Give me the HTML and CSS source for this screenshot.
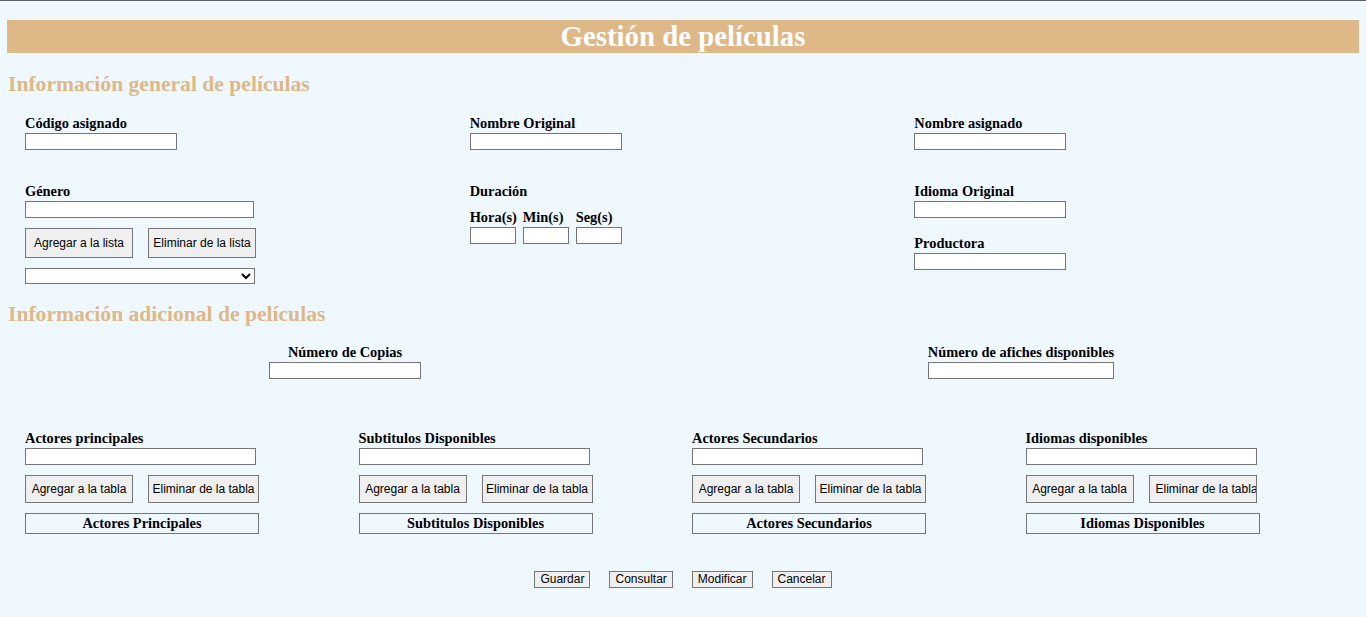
FILE: index.html
```html
<!DOCTYPE html>
<html lang="es">
<head>
<meta charset="utf-8">
<title>Gestión de películas</title>
<link rel="stylesheet" href="styles.css">
</head>
<body>
<div class="page">
  <h1 class="banner">Gestión de películas</h1>

  <h2 class="section">Información general de películas</h2>
  <div class="general">
    <div class="field">
      <label class="lbl">Código asignado</label>
      <input class="txt w152" type="text">
    </div>
    <div class="field">
      <label class="lbl">Nombre Original</label>
      <input class="txt w152" type="text">
    </div>
    <div class="field">
      <label class="lbl">Nombre asignado</label>
      <input class="txt w152" type="text">
    </div>

    <div class="field">
      <label class="lbl">Género</label>
      <input class="txt w229" type="text">
      <div class="btnrow">
        <button class="btn">Agregar a la lista</button>
        <button class="btn">Eliminar de la lista</button>
      </div>
      <select class="sel"><option></option></select>
    </div>
    <div class="field">
      <label class="lbl">Duración</label>
      <div class="duration">
        <div class="dur">
          <label class="lbl">Hora(s)</label>
          <input class="txt w46" type="text">
        </div>
        <div class="dur">
          <label class="lbl">Min(s)</label>
          <input class="txt w46" type="text">
        </div>
        <div class="dur">
          <label class="lbl">Seg(s)</label>
          <input class="txt w46" type="text">
        </div>
      </div>
    </div>
    <div class="field">
      <label class="lbl">Idioma Original</label>
      <input class="txt w152" type="text">
      <label class="lbl lbl-gap">Productora</label>
      <input class="txt w152" type="text">
    </div>
  </div>

  <h2 class="section section-2">Información adicional de películas</h2>
  <div class="extra">
    <div class="cell">
      <label class="lbl">Número de Copias</label>
      <input class="txt w152" type="text">
    </div>
    <div class="cell">
      <label class="lbl">Número de afiches disponibles</label>
      <input class="txt w186" type="text">
    </div>
  </div>

  <div class="lists">
    <div class="field">
      <label class="lbl">Actores principales</label>
      <input class="txt w231" type="text">
      <div class="btnrow">
        <button class="btn btn-t">Agregar a la tabla</button>
        <button class="btn btn-t btn-del">Eliminar de la tabla</button>
      </div>
      <div class="tbl">Actores Principales</div>
    </div>
    <div class="field">
      <label class="lbl">Subtitulos Disponibles</label>
      <input class="txt w231" type="text">
      <div class="btnrow">
        <button class="btn btn-t">Agregar a la tabla</button>
        <button class="btn btn-t btn-del">Eliminar de la tabla</button>
      </div>
      <div class="tbl">Subtitulos Disponibles</div>
    </div>
    <div class="field">
      <label class="lbl">Actores Secundarios</label>
      <input class="txt w231" type="text">
      <div class="btnrow">
        <button class="btn btn-t">Agregar a la tabla</button>
        <button class="btn btn-t btn-del">Eliminar de la tabla</button>
      </div>
      <div class="tbl">Actores Secundarios</div>
    </div>
    <div class="field">
      <label class="lbl">Idiomas disponibles</label>
      <input class="txt w231" type="text">
      <div class="btnrow">
        <button class="btn btn-t">Agregar a la tabla</button>
        <button class="btn btn-t btn-del btn-clip">Eliminar de la tabla</button>
      </div>
      <div class="tbl">Idiomas Disponibles</div>
    </div>
  </div>

  <div class="actions">
    <button class="act">Guardar</button>
    <button class="act">Consultar</button>
    <button class="act">Modificar</button>
    <button class="act">Cancelar</button>
  </div>
</div>
</body>
</html>
```

FILE: styles.css
```css
html {
  background: #f0f8ff;
}
body {
  margin: 0;
  border-top: 1px solid #5f5f5f;
  background: #f0f8ff;
  font-family: "Liberation Serif", "Times New Roman", serif;
  color: #000;
}
.page {
  padding: 19px 7px 0 7px;
}
.banner {
  margin: 0;
  height: 33px;
  line-height: 33px;
  background: #deb887;
  color: #fff;
  text-align: center;
  font-size: 28.8px;
  font-weight: bold;
}
.section {
  margin: 17px 0 0 1px;
  height: 28px;
  line-height: 28px;
  font-size: 21.6px;
  font-weight: bold;
  color: #deb887;
}
.section-2 {
  margin-top: 16px;
}
.general {
  margin-top: 17px;
  padding-left: 18px;
  display: grid;
  grid-template-columns: repeat(3, 1fr);
  row-gap: 33px;
  align-items: start;
}
.field {
  display: flex;
  flex-direction: column;
  align-items: flex-start;
}
.lbl {
  display: block;
  font-size: 14.4px;
  line-height: 16px;
  padding-bottom: 2px;
  font-weight: bold;
  white-space: nowrap;
}
.lbl-gap {
  margin-top: 17px;
}
.txt {
  box-sizing: border-box;
  height: 17px;
  border: 1px solid #767676;
  background: #fff;
  padding: 0 2px;
  margin: 0;
  display: block;
}
.w46 { width: 46px; }
.w152 { width: 152px; }
.w186 { width: 186px; }
.w229 { width: 229px; }
.w231 { width: 231px; }
.btnrow {
  display: flex;
  gap: 15px;
  margin-top: 10px;
}
.btn {
  box-sizing: border-box;
  width: 108px;
  height: 30px;
  margin: 0;
  padding: 0;
  border: 1px solid #767676;
  border-radius: 0;
  background: #efefef;
  font-family: "Liberation Sans", Arial, sans-serif;
  font-size: 12px;
  color: #000;
  white-space: nowrap;
  overflow: hidden;
}
.btn-t {
  height: 28px;
}
.btn-del {
  width: 111px;
}
.btn-clip {
  width: 108px;
  text-align: left;
  padding-left: 6px;
}
.sel {
  box-sizing: border-box;
  width: 230px;
  height: 16px;
  margin-top: 10px;
  border: 1px solid #767676;
  background: #fff;
  font-size: 11px;
  padding: 0;
}
.duration {
  display: flex;
  gap: 7px;
  margin-top: 8px;
}
.dur {
  display: flex;
  flex-direction: column;
  width: 46px;
}
.extra {
  margin-top: 16px;
  display: grid;
  grid-template-columns: 1fr 1fr;
  justify-items: center;
}
.cell {
  display: flex;
  flex-direction: column;
  align-items: center;
  text-align: center;
}
.lists {
  margin-top: 51px;
  padding-left: 18px;
  display: grid;
  grid-template-columns: repeat(4, 1fr);
}
.tbl {
  box-sizing: border-box;
  width: 234px;
  height: 21px;
  margin-top: 10px;
  border: 1px solid #767676;
  text-align: center;
  font-size: 14.4px;
  font-weight: bold;
  line-height: 19px;
}
.actions {
  margin-top: 37px;
  display: flex;
  justify-content: center;
  gap: 19px;
  padding-bottom: 20px;
}
.act {
  box-sizing: border-box;
  height: 17px;
  margin: 0;
  padding: 0 5px;
  border: 1px solid #767676;
  border-radius: 0;
  background: #efefef;
  font-family: "Liberation Sans", Arial, sans-serif;
  font-size: 12px;
  line-height: 15px;
  color: #000;
}
```
